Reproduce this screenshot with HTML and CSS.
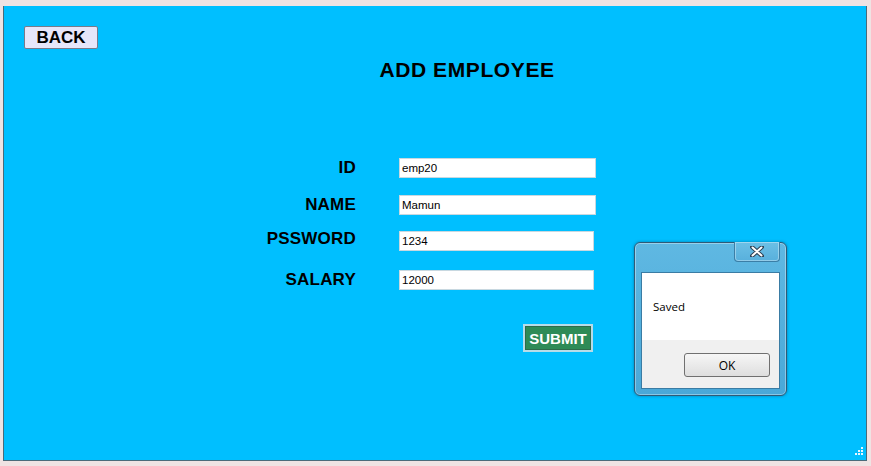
FILE: index.html
```html
<!DOCTYPE html>
<html>
<head>
<meta charset="utf-8">
<link rel="stylesheet" href="styles.css">
</head>
<body>
<div class="window">
  <button class="back">BACK</button>
  <h1 class="title">ADD EMPLOYEE</h1>
  <div class="form">
    <label class="lbl">ID</label><div class="inp">emp20</div>
    <label class="lbl">NAME</label><div class="inp">Mamun</div>
    <label class="lbl r3">PSSWORD</label><div class="inp short r3">1234</div>
    <label class="lbl r4">SALARY</label><div class="inp short r4">12000</div>
    <div></div><div class="submit-wrap"><button class="submit">SUBMIT</button></div>
  </div>
  <div class="grip">
    <svg width="10" height="10" viewBox="0 0 10 10"><g fill="#e8f6ff"><rect x="8" y="0" width="2" height="2"/><rect x="5" y="3" width="2" height="2"/><rect x="8" y="3" width="2" height="2"/><rect x="2" y="6" width="2" height="2"/><rect x="5" y="6" width="2" height="2"/><rect x="8" y="6" width="2" height="2"/></g></svg>
  </div>
</div>
<div class="dialog">
  <div class="dlg-title">
    <div class="close"><svg width="14" height="11" viewBox="0 0 14 11"><path d="M2 1 L12 10 M12 1 L2 10" stroke="#2d3e50" stroke-width="4" stroke-linecap="round"/><path d="M2.5 1.5 L11.5 9.5 M11.5 1.5 L2.5 9.5" stroke="#ffffff" stroke-width="2" stroke-linecap="round"/></svg></div>
  </div>
  <div class="dlg-client">
    <div class="dlg-msg">Saved</div>
    <div class="dlg-foot"><button class="ok">OK</button></div>
  </div>
</div>
</body>
</html>
```
FILE: styles.css
```css
html, body { margin: 0; padding: 0; }
body {
  width: 871px; height: 466px; overflow: hidden;
  background: #efe3e3;
  font-family: "Liberation Sans", Arial, sans-serif;
  position: relative;
}
.window {
  margin: 6px 0 0 3px;
  width: 864px; height: 455px;
  background: #00bfff;
  border: 1px solid #4a6b7a;
  border-top: none;
  box-sizing: border-box;
  padding: 20px 0 0 0;
  position: relative;
  display: flex; flex-direction: column;
}
.back {
  align-self: flex-start;
  margin-left: 20px;
  width: 74px; height: 23px;
  background: #e6e6fa;
  border: 1px solid #7a7a8a;
  border-radius: 2px;
  font-family: "Liberation Sans", Arial, sans-serif;
  font-weight: bold; font-size: 17px;
  color: #000; padding: 0; line-height: 20px;
}
.title {
  margin: 8px 0 0 0;
  text-align: center;
  font-size: 21px; font-weight: bold;
  letter-spacing: 0.6px;
  line-height: 26px; color: #000;
  padding-left: 64px;
}
.form {
  margin-top: 75px;
  display: grid;
  grid-template-columns: 353px 197px;
  column-gap: 42px;
  row-gap: 17px;
  align-items: center;
}
.lbl {
  text-align: right;
  font-size: 17px; font-weight: bold; color: #000;
  line-height: 20px;
  letter-spacing: 0.2px;
  margin-right: 1px;
}
.r3 { margin-top: -1px; }
.lbl.r3 { margin-top: -5px; }
.r4 { margin-top: 2px; }
.inp {
  height: 20px; box-sizing: border-box;
  background: #fff;
  border: 1px solid #c8d8e0;
  font-size: 11.5px; line-height: 18px;
  padding-left: 2px; color: #000;
}
.inp.short { width: 195px; }
.submit-wrap { display: flex; justify-content: flex-end; margin-top: 17px; padding-right: 3px; }
.submit {
  width: 70px; height: 28px;
  background: #2e8b57;
  border: 2px solid #b8dce8;
  box-shadow: inset 0 0 0 1px #2e6b4a;
  color: #fff; font-family: "Liberation Sans", Arial, sans-serif;
  font-weight: bold; font-size: 15px; padding: 0;
}
.grip { position: absolute; right: 3px; bottom: 3px; width: 10px; height: 10px; line-height: 0; }
.dialog {
  position: absolute; left: 634px; top: 242px;
  width: 153px; height: 154px; box-sizing: border-box;
  background: linear-gradient(#5fb8e2, #4aa8d8);
  border: 1px solid #2f5b78;
  border-radius: 6px;
  box-shadow: 0 0 3px rgba(0,60,90,0.5), inset 0 0 0 1px rgba(255,255,255,0.35);
  padding: 0 6px 6px 6px;
  display: flex; flex-direction: column;
}
.dlg-title { height: 29px; position: relative; flex: none; }
.close {
  position: absolute; right: 0px; top: -1px;
  width: 46px; height: 20px; box-sizing: border-box;
  border: 1px solid #3b7ea6; border-top: none;
  border-radius: 0 0 4px 4px;
  background: linear-gradient(#6cc0e6, #58b0dc);
  box-shadow: inset 0 0 0 1px rgba(255,255,255,0.35);
  display: flex; align-items: center; justify-content: center;
}
.dlg-client {
  flex: 1; background: #f0f0f0;
  border: 1px solid #3a7ca4;
  display: flex; flex-direction: column;
}
.dlg-msg {
  background: #fff; height: 67px;
  font-family: "Open Sans", "Liberation Sans", sans-serif;
  font-size: 11.5px; color: #000;
  padding: 26px 0 0 11px; box-sizing: border-box;
}
.dlg-foot { flex: 1; display: flex; justify-content: flex-end; align-items: flex-start; padding: 13px 9px 0 0; }
.ok {
  width: 86px; height: 24px;
  background: linear-gradient(#f6f6f6, #dedede);
  border: 1px solid #707070; border-radius: 3px;
  font-family: "Open Sans", "Liberation Sans", sans-serif;
  font-size: 12px; color: #000; padding: 0;
}
```
